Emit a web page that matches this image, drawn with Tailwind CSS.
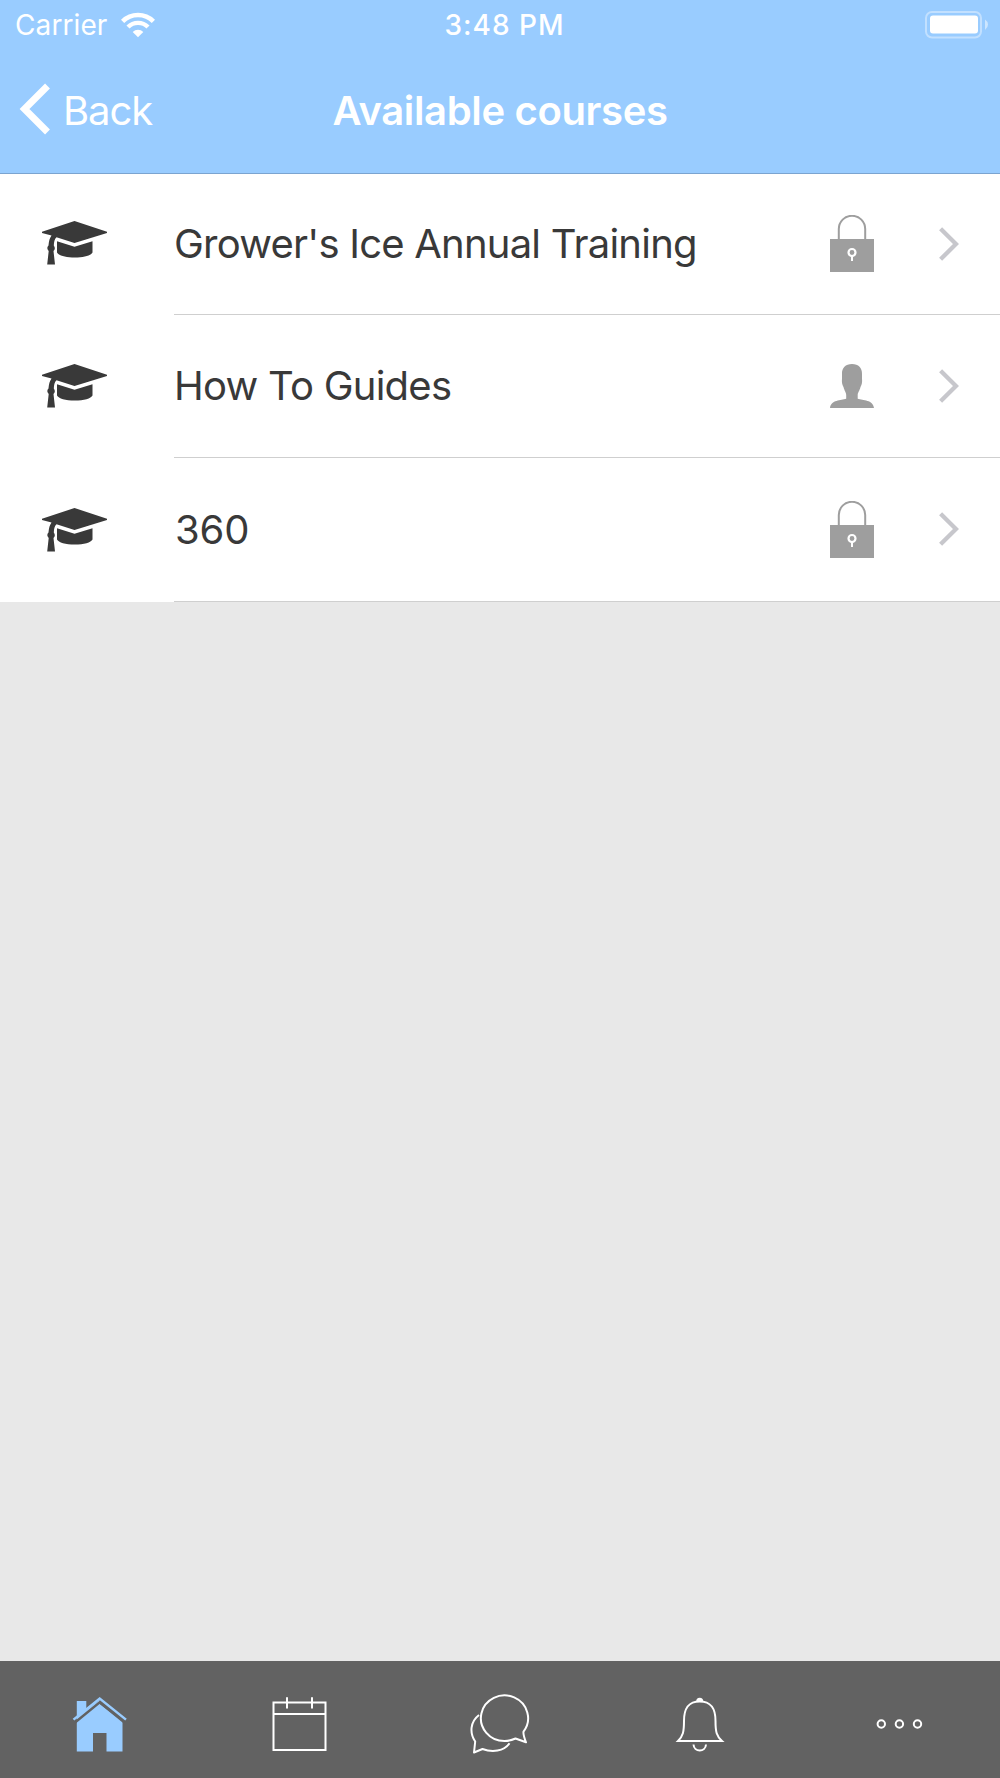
<!DOCTYPE html>
<html lang="en">
<head>
<meta charset="utf-8">
<title>Available courses</title>
<script src="https://cdn.jsdelivr.net/npm/@tailwindcss/browser@4"></script>
</head>
<body class="bg-[#e8e8e8]">
<svg class="hidden">
  <symbol id="cap" viewBox="0 0 65 44"><path d="M0 10.700L32.500 0 65 10.700V12L32.500 22 14.500 16.200C12.500 18 12 21 11.800 24.500Q14 27.500 11.500 30L13 43.500H5.200L6.700 30Q4 27 6.500 24.500C7 20 7.500 17.500 9.500 14.600L0 12ZM15 20.200L32.500 25.700 50.500 20.200V31.500C49 34.500 42 36.500 32.800 36.500S16.500 34.500 15 31.500Z" fill="#393939"/></symbol>
  <symbol id="lock" viewBox="0 0 44 58"><path d="M8.800 25V14a13.200 13.200 0 0 1 26.400 0V25" fill="none" stroke="#9e9e9e" stroke-width="2"/><path d="M0 24H44V57H0Z" fill="#9e9e9e"/><circle cx="22" cy="37.500" r="3.500" fill="none" stroke="#fff" stroke-width="2.200"/><path d="M22 41V46" stroke="#fff" stroke-width="2"/></symbol>
  <symbol id="user" viewBox="0 0 44 44"><path d="M22 0C28.500 0 32.300 4 32 10V14.500C32.500 18.500 31.500 21.500 30.500 23 29.500 27 27.700 28.500 27.700 31V34.700C33 36.500 43 35.500 44 44H0C1 35.500 11 36.500 16.200 34.700V31C16.200 28.500 14.500 27 13.500 23 12.500 21.500 11.500 18.500 12 14.500V10C11.700 4 15.500 0 22 0Z" fill="#9e9e9e"/></symbol>
  <symbol id="next" viewBox="0 0 20 34"><path d="M1.600 1.700L17 17 1.600 32.300" fill="none" stroke="#c7c7cc" stroke-width="4.300"/></symbol>
</svg>
<div class="flex h-[1778px] w-[1000px] flex-col overflow-hidden font-['Inter',sans-serif]">
  <header class="flex h-[174px] flex-col border-b border-[#7ba4d0] bg-[#99ccff] text-white">
    <div class="grid h-[50px] grid-cols-3 pr-[12px] pl-[15px] text-[28px] leading-[51px]">
      <div class="flex items-center gap-[14px]">
        <span class="tracking-[0.1px]">Carrier</span>
        <svg class="mb-[2px] h-[26px] w-[34px]" viewBox="0 0 34 26"><g fill="none" stroke="#fff"><path d="M1.600 9.300A22 22 0 0 1 32.400 9.300" stroke-width="4.600"/><path d="M7 15A14.200 14.200 0 0 1 27 15" stroke-width="4.400"/></g><path d="M17 25.200L11.700 19.900A7.500 7.500 0 0 1 22.300 19.900Z" fill="#fff"/></svg>
      </div>
      <div class="pl-[6px] text-center font-medium"><span class="tracking-[1px]">3:48 PM</span></div>
      <div class="flex items-center justify-end">
        <svg class="mb-[1px] h-[28px] w-[63px]" viewBox="0 0 63 28"><rect x="1" y="1" width="55" height="25.500" rx="6" fill="none" stroke="#fff" stroke-opacity=".4" stroke-width="2"/><rect x="5" y="4.500" width="48" height="18" rx="3" fill="#fff"/><path d="M60 8.500Q63 10.500 63 13.500T60 19Z" fill="#fff" fill-opacity=".5"/></svg>
      </div>
    </div>
    <div class="grid h-[123px] grid-cols-[1fr_auto_1fr] pb-[2px] text-[40px] leading-[121px]">
      <div class="flex items-center gap-[12px] pl-[19px]">
        <svg class="mb-[4px] h-[52px] w-[32px]" viewBox="0 0 32 52"><path d="M28.500 3L5.500 26 28.500 49" fill="none" stroke="#fff" stroke-width="6.900"/></svg>
        <span class="tracking-[-1.1px]">Back</span>
      </div>
      <h1 class="font-semibold tracking-[-0.35px]">Available courses</h1>
      <div></div>
    </div>
  </header>
  <main class="flex-1">
    <ul class="text-[40px] text-[#393939]">
      <li class="flex h-[141px] items-center bg-white pl-[42px]">
        <svg class="mb-[3px] h-[44px] w-[65px]"><use href="#cap"/></svg>
        <div class="ml-[67px] flex h-full flex-1 items-center border-b border-[#cfcfcf] pr-[41px]">
          <span class="flex-1 tracking-[-0.78px]">Grower's Ice Annual Training</span>
          <svg class="h-[58px] w-[44px]"><use href="#lock"/></svg>
          <svg class="mb-[1px] ml-[65px] h-[34px] w-[20px]"><use href="#next"/></svg>
        </div>
      </li>
      <li class="flex h-[143px] items-center bg-white pl-[42px]">
        <svg class="mb-[1px] h-[44px] w-[65px]"><use href="#cap"/></svg>
        <div class="ml-[67px] flex h-full flex-1 items-center border-b border-[#cfcfcf] pr-[41px]">
          <span class="flex-1 tracking-[-0.75px]">How To Guides</span>
          <svg class="h-[44px] w-[44px]"><use href="#user"/></svg>
          <svg class="mb-[1px] ml-[65px] h-[34px] w-[20px]"><use href="#next"/></svg>
        </div>
      </li>
      <li class="flex h-[144px] items-center bg-white pl-[42px]">
        <svg class="mb-[1px] h-[44px] w-[65px]"><use href="#cap"/></svg>
        <div class="ml-[67px] flex h-full flex-1 items-center border-b border-[#cfcfcf] pr-[41px]">
          <span class="flex-1 pl-px tracking-[-0.1px]">360</span>
          <svg class="h-[58px] w-[44px]"><use href="#lock"/></svg>
          <svg class="mb-[2px] ml-[65px] h-[34px] w-[20px]"><use href="#next"/></svg>
        </div>
      </li>
    </ul>
  </main>
  <nav class="grid h-[117px] grid-cols-5 items-center justify-items-center bg-[#626262] pt-[11px]">
    <svg class="size-[60px]" viewBox="0 0 60 60"><path d="M6.800 23V6H16.300V15L29.700 5V9L52.500 26.500V56.500H36.500V38H23V56.500H6.800Z" fill="#9cf"/><path d="M5 27.500L29.700 7.300 54.500 27.500" fill="none" stroke="#626262" stroke-width="2.400"/><path d="M3.500 24.600L29.700 3.500 56 24.600" fill="none" stroke="#9cf" stroke-width="2.500"/></svg>
    <svg class="size-[60px]" viewBox="0 0 60 60" fill="none" stroke="#fff" stroke-width="2"><path d="M3.500 7.500H55.500V55H3.500ZM3.500 19H55.500M17 2.300V13.500M42 2.300V13.500"/></svg>
    <svg class="size-[60px] overflow-visible" viewBox="0 0 60 60" fill="none" stroke="#fff" stroke-width="2" stroke-linejoin="round"><path d="M56 47.300L45.500 43.500Q40 46 34.500 46A23.600 22.800 0 1 1 53.500 36.700Q53 39.500 56 47.300Z"/><path d="M9 20C0 27-.5 38 5.200 46.500L4 57.500 12.500 54C22 57.500 34 56.500 39.500 48.300"/></svg>
    <svg class="size-[60px]" viewBox="0 0 60 60" fill="none" stroke="#fff" stroke-width="2"><path d="M8 46C13 41 14 37 14 26 14 13 18.500 6.500 29.700 6.500S45.500 13 45.500 26C45.500 37 46.500 41 52 46Z"/><path d="M23.500 49.500C24 57.500 35.500 57.500 36 49.500"/><path d="M26.200 6.200a3.500 3.500 0 0 1 7 0Z" fill="#fff" stroke="none"/></svg>
    <svg class="size-[60px]" viewBox="0 0 60 60" fill="none" stroke="#fff" stroke-width="2"><circle cx="11.300" cy="29" r="3.700"/><circle cx="29.400" cy="29" r="3.700"/><circle cx="47.500" cy="29" r="3.700"/></svg>
  </nav>
</div>
</body>
</html>
